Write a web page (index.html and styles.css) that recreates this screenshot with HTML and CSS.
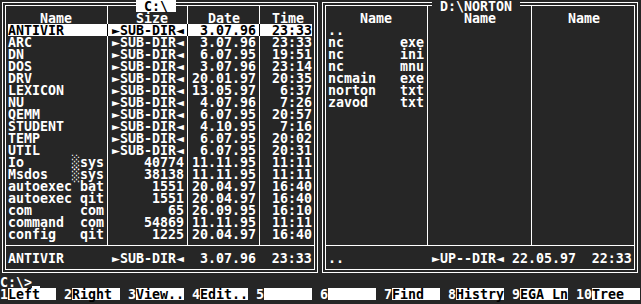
FILE: index.html
```html
<!DOCTYPE html>
<html>
<head>
<meta charset="utf-8">
<title>Norton Commander</title>
<link rel="stylesheet" href="styles.css">
</head>
<body>
<div class="screen">
  <div class="panels">
    <section class="panel">
      <div class="title active"> C:\ </div>
      <div class="frame">
        <div class="inner">
          <div class="files">
            <div class="row head"><span class="c n">    Name</span><span class="c s">   Size</span><span class="c d">  Date</span><span class="c t"> Time</span></div>
            <div class="row sel"><span class="c n">ANTIVIR</span><span class="c s">►SUB-DIR◄</span><span class="c d">3.07.96</span><span class="c t">23:33</span></div>
            <div class="row"><span class="c n">ARC</span><span class="c s">►SUB-DIR◄</span><span class="c d">3.07.96</span><span class="c t">23:33</span></div>
            <div class="row"><span class="c n">DN</span><span class="c s">►SUB-DIR◄</span><span class="c d">6.07.95</span><span class="c t">19:51</span></div>
            <div class="row"><span class="c n">DOS</span><span class="c s">►SUB-DIR◄</span><span class="c d">3.07.96</span><span class="c t">23:14</span></div>
            <div class="row"><span class="c n">DRV</span><span class="c s">►SUB-DIR◄</span><span class="c d">20.01.97</span><span class="c t">20:35</span></div>
            <div class="row"><span class="c n">LEXICON</span><span class="c s">►SUB-DIR◄</span><span class="c d">13.05.97</span><span class="c t">6:37</span></div>
            <div class="row"><span class="c n">NU</span><span class="c s">►SUB-DIR◄</span><span class="c d">4.07.96</span><span class="c t">7:26</span></div>
            <div class="row"><span class="c n">QEMM</span><span class="c s">►SUB-DIR◄</span><span class="c d">6.07.95</span><span class="c t">20:57</span></div>
            <div class="row"><span class="c n">STUDENT</span><span class="c s">►SUB-DIR◄</span><span class="c d">4.10.95</span><span class="c t">7:16</span></div>
            <div class="row"><span class="c n">TEMP</span><span class="c s">►SUB-DIR◄</span><span class="c d">6.07.95</span><span class="c t">20:02</span></div>
            <div class="row"><span class="c n">UTIL</span><span class="c s">►SUB-DIR◄</span><span class="c d">6.07.95</span><span class="c t">20:31</span></div>
            <div class="row"><span class="c n">Io      ░sys</span><span class="c s">40774</span><span class="c d">11.11.95</span><span class="c t">11:11</span></div>
            <div class="row"><span class="c n">Msdos   ░sys</span><span class="c s">38138</span><span class="c d">11.11.95</span><span class="c t">11:11</span></div>
            <div class="row"><span class="c n">autoexec bat</span><span class="c s">1551</span><span class="c d">20.04.97</span><span class="c t">16:40</span></div>
            <div class="row"><span class="c n">autoexec qit</span><span class="c s">1551</span><span class="c d">20.04.97</span><span class="c t">16:40</span></div>
            <div class="row"><span class="c n">com      com</span><span class="c s">65</span><span class="c d">26.09.95</span><span class="c t">16:10</span></div>
            <div class="row"><span class="c n">command  com</span><span class="c s">54869</span><span class="c d">11.11.95</span><span class="c t">11:11</span></div>
            <div class="row"><span class="c n">config   qit</span><span class="c s">1225</span><span class="c d">20.04.97</span><span class="c t">16:40</span></div>
            <div class="row end"><span class="c n"></span><span class="c s"></span><span class="c d"></span><span class="c t"></span></div>
          </div>
          <div class="status">ANTIVIR      ►SUB-DIR◄  3.07.96  23:33</div>
        </div>
      </div>
    </section>
    <section class="panel">
      <div class="title passive"> D:\NORTON </div>
      <div class="frame">
        <div class="inner">
          <div class="cols">
            <div class="col first"><div class="hd">    Name</div><div>..</div><div>nc       exe</div><div>nc       ini</div><div>nc       mnu</div><div>ncmain   exe</div><div>norton   txt</div><div>zavod    txt</div></div>
            <div class="col mid"><div class="hd">    Name</div></div>
            <div class="col last"><div class="hd">    Name</div></div>
          </div>
          <div class="status">..           ►UP--DIR◄ 22.05.97  22:33</div>
        </div>
      </div>
    </section>
  </div>
  <div class="cmd"><span>C:\&gt;</span><span class="cursor"></span></div>
  <div class="keys">
    <div class="key"><span class="num">1</span><span class="lbl">Left</span></div>
    <div class="key"><span class="num">2</span><span class="lbl">Right</span></div>
    <div class="key"><span class="num">3</span><span class="lbl">View..</span></div>
    <div class="key"><span class="num">4</span><span class="lbl">Edit..</span></div>
    <div class="key"><span class="num">5</span><span class="lbl"></span></div>
    <div class="key"><span class="num">6</span><span class="lbl"></span></div>
    <div class="key"><span class="num">7</span><span class="lbl">Find</span></div>
    <div class="key"><span class="num">8</span><span class="lbl">Histry</span></div>
    <div class="key"><span class="num">9</span><span class="lbl">EGA Ln</span></div>
    <div class="key"><span class="num">10</span><span class="lbl">Tree</span></div>
  </div>
</div>
</body>
</html>
```
FILE: styles.css
```css
* {
  box-sizing: border-box;
  margin: 0;
  padding: 0;
}

html,
body {
  background: #262626;
}

body {
  margin: 0;
  width: 641px;
  height: 304px;
  overflow: hidden;
  color: #fff;
  font-family: "DejaVu Sans Mono", "Liberation Mono", monospace;
  font-weight: bold;
  font-size: 13.29px;
  line-height: 14px;
}

.screen {
  width: 640px;
}

.panels {
  display: flex;
}

.panel {
  position: relative;
  width: 320px;
  height: 276px;
  padding: 2px 2px 3px 2px;
}

.frame {
  height: 100%;
  border: 1px solid #fff;
  padding: 2px;
}

.inner {
  height: 100%;
  border: 1px solid #fff;
  display: flex;
  flex-direction: column;
}

.title {
  position: absolute;
  top: 0;
  height: 12px;
  white-space: pre;
}

.title.active {
  left: 136px;
  background: #fff;
  color: #000;
}

.title.passive {
  left: 112px;
  background: #262626;
  color: #fff;
}

.files {
  height: 239px;
}

.row {
  display: grid;
  grid-template-columns: 100px 80px 72px 52px;
  grid-template-rows: 100%;
  padding: 0 2px;
  height: 12px;
}

.c {
  border-right: 1px solid #fff;
  white-space: pre;
  padding: 0 3px 0 4px;
  text-align: right;
}

.c.n {
  padding: 0 3px 0 0;
  text-align: left;
}

.c.t {
  border-right: 0;
  padding: 0 0 0 4px;
}

.row.head {
  height: 18px;
}

.row.head .c {
  padding-top: 6px;
  text-align: left;
}

.row.end {
  height: 5px;
}

.row.sel .c {
  background: #fff;
  color: #000;
  border-color: #000;
}

.status {
  height: 24px;
  border-top: 1px solid #fff;
  padding: 6px 0 0 2px;
  white-space: pre;
}

.cols {
  display: flex;
  height: 239px;
}

.col {
  border-right: 1px solid #fff;
  padding-left: 4px;
  white-space: pre;
}

.col > div {
  height: 12px;
}

.col.first {
  width: 102px;
  padding-left: 2px;
}

.col.mid {
  width: 104px;
}

.col.last {
  width: 102px;
  border-right: 0;
}

.col > .hd {
  height: 18px;
  padding-top: 6px;
}

.cmd {
  height: 12px;
  display: flex;
  white-space: pre;
}

.cmd span {
  height: 12px;
}

.cursor {
  align-self: flex-end;
  width: 8px;
  background: #fff;
}

.cmd .cursor {
  height: 2px;
}

.keys {
  display: flex;
  gap: 8px;
  height: 12px;
  white-space: pre;
}

.key {
  display: flex;
  height: 12px;
}

.lbl {
  width: 48px;
  height: 12px;
  background: #fff;
  color: #000;
}
```
